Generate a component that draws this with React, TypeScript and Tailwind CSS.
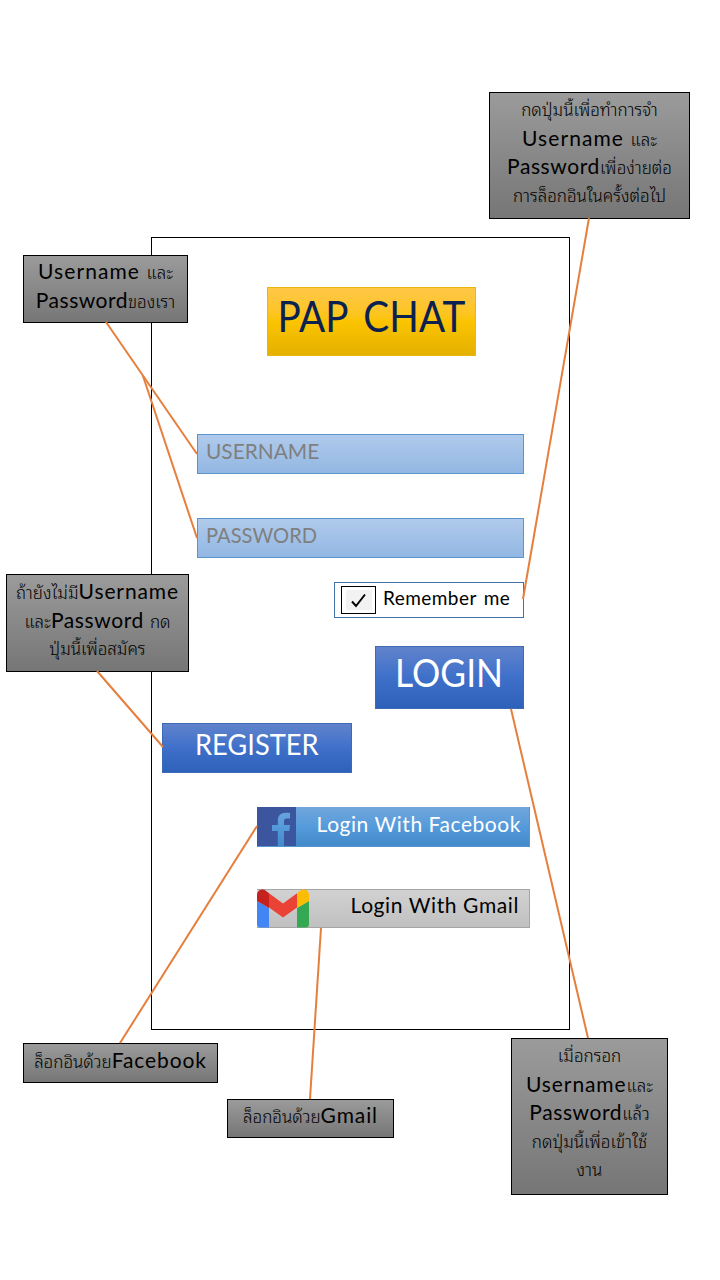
import type { ReactNode } from "react";

type NoteProps = { box: string; children: ReactNode };

function Note({ box, children }: NoteProps) {
  return (
    <div
      className={`absolute flex flex-col items-center border border-black bg-linear-to-b from-[#9b9b9b] to-[#767676] text-black ${box}`}
    >
      {children}
    </div>
  );
}

function Line({ children }: { children: ReactNode }) {
  return <div className="flex h-[28.6px] items-baseline whitespace-pre leading-[28.6px]">{children}</div>;
}

function En({ children, space = "tracking-[0.9px]" }: { children: ReactNode; space?: string }) {
  return <span className={`text-[21px] font-normal ${space}`}>{children}</span>;
}

function Th({ children, space = "tracking-normal" }: { children: ReactNode; space?: string }) {
  return (
    <span
      className={`font-['Noto_Sans_Thai_Looped','Noto_Looped_Thai',Loma,Garuda,Waree,Lato,sans-serif] text-[17px] font-light ${space}`}
    >
      {children}
    </span>
  );
}

const connectors = [
  [589, 218, 523, 599],
  [106, 322, 197, 454],
  [143, 376, 197, 538],
  [97, 671, 163, 747],
  [511, 709, 588, 1038],
  [257, 826, 120, 1043],
  [321, 928, 310, 1099],
];

function FacebookLogo() {
  return (
    <svg viewBox="0 0 39 39" className="h-[39px] w-[39px] shrink-0">
      <path
        fillRule="evenodd"
        fill="#3b559f"
        d="M0 0h39v39H27V24h5.300l.8-6H27v-3.700c0-1.800.6-2.900 3-2.900h3V6.100c-.6-.1-2.400-.3-4.500-.3-4.600 0-7.700 2.800-7.700 7.800V18H15v6h5.800v15H0z"
      />
    </svg>
  );
}

function GmailLogo() {
  return (
    <svg viewBox="0 0 52 39" className="-mt-px h-[39px] w-[52px] shrink-0">
      <path fill="#4285f4" d="M0 12l12 7v19.500H3.500A3.500 3.500 0 0 1 0 35z" />
      <path fill="#34a853" d="M40 19l12-7v23a3.500 3.500 0 0 1-3.500 3.500H40z" />
      <path fill="#fbbc04" d="M40 4.300l2.500-2C46-1.500 52 .8 52 6v6l-12 7z" />
      <path fill="#ea4335" d="M12 4.300l14 10.200L40 4.300V18.500L26 28.500 12 18.500z" />
      <path fill="#c5221f" d="M0 6C0 .8 6-1.500 9.500 2.200L12 4.300V19L0 12z" />
    </svg>
  );
}

export default function App() {
  return (
    <div className="relative h-[1280px] w-[720px] overflow-hidden bg-white pt-[237px] pl-[151px] font-[Lato,sans-serif]">
      <main className="flex h-[793px] w-[419px] flex-col border border-black pt-[49px]">
        <h1 className="ml-[115px] flex h-[69px] w-[209px] justify-center border border-[#e8b810] bg-linear-to-b from-[#ffc746] via-[#fbc400] to-[#e5b000] text-[43px] leading-[56px] whitespace-nowrap text-[#0b2150]">
          <span className="inline-block scale-x-[0.9] tracking-[0.2px] [word-spacing:6px]">PAP CHAT</span>
        </h1>
        <div className="mt-[78px] ml-[45px] h-10 w-[327px] border border-[#5b95cc] bg-linear-to-b from-[#b0caeb] to-[#92b7e3] pl-2 text-[21.5px] leading-[33px] text-[#7f7f7f]">
          <span className="inline-block origin-left scale-x-[0.97]">USERNAME</span>
        </div>
        <div className="mt-11 ml-[45px] h-10 w-[327px] border border-[#5b95cc] bg-linear-to-b from-[#b0caeb] to-[#92b7e3] pl-2 text-[21.5px] leading-[33px] text-[#7f7f7f]">
          <span className="inline-block origin-left scale-x-[0.935]">PASSWORD</span>
        </div>
        <label className="mt-6 ml-[182px] flex h-9 w-[190px] items-start border border-[#4472a8] bg-white pt-[3px] pl-1.5">
          <span className="flex h-7 w-[35px] items-center justify-center border border-black">
            <span className="flex h-5 w-[26px] items-center justify-center bg-[#f2f2f2]">
              <svg viewBox="0 0 16 15" className="h-[15px] w-4">
                <path d="M1 8.500l4 4.500L14 1.500" fill="none" stroke="#000" strokeWidth="2" />
              </svg>
            </span>
          </span>
          <span className="ml-[7px] text-[19px] leading-[24px] tracking-[0.45px] whitespace-nowrap text-black [word-spacing:2px]">
            Remember me
          </span>
        </label>
        <button className="mt-7 ml-[223px] flex h-[63px] w-[149px] justify-center border border-[#3d69b5] bg-linear-to-b from-[#6083cb] via-[#3e70ca] to-[#2e61ba] text-[38px] leading-[51px] text-white">
          <span className="inline-block scale-x-[0.93]">LOGIN</span>
        </button>
        <button className="mt-3.5 ml-2.5 flex h-[50px] w-[190px] justify-center border border-[#3d69b5] bg-linear-to-b from-[#6083cb] via-[#3e70ca] to-[#2e61ba] text-[29px] leading-[40px] text-white">
          <span className="inline-block scale-x-[0.94]">REGISTER</span>
        </button>
        <button className="mt-[34px] ml-[105px] flex h-10 w-[273px] justify-between border-r border-b border-[#5595cf] bg-linear-to-b from-[#71a6db] via-[#559bdb] to-[#438ac9] pr-2 text-[21px] leading-[34px] whitespace-nowrap text-white">
          <FacebookLogo />
          <span className="tracking-[0.55px]">Login With Facebook</span>
        </button>
        <button className="mt-[42px] ml-[105px] flex h-[39px] w-[273px] justify-between border-y border-r border-[#a5a5a5] bg-linear-to-b from-[#d2d2d2] to-[#c0c0c0] pr-2.5 text-[21px] leading-[30px] whitespace-nowrap text-black">
          <GmailLogo />
          <span className="tracking-[0.6px]">Login With Gmail</span>
        </button>
      </main>

      <Note box="left-[489px] top-[92px] h-[127px] w-[201px] pt-[2px]">
        <Line><Th>กดปุ่มนี้เพื่อทำการจำ</Th></Line>
        <Line><En space="tracking-[1.1px]">Username </En><Th>และ</Th></Line>
        <Line><En space="tracking-[0.6px]">Password</En><Th>เพื่อง่ายต่อ</Th></Line>
        <Line><Th>การล็อกอินในครั้งต่อไป</Th></Line>
      </Note>
      <Note box="left-[23px] top-[255px] h-[68px] w-[165px] pt-px">
        <Line><En space="tracking-[1.1px]">Username </En><Th>และ</Th></Line>
        <Line><En space="tracking-[0.5px]">Password</En><Th>ของเรา</Th></Line>
      </Note>
      <Note box="left-[6px] top-[574px] h-[98px] w-[183px] pt-[2px]">
        <Line><Th>ถ้ายังไม่มี</Th><En>Username</En></Line>
        <Line><Th>และ</Th><En space="tracking-[0.6px]">Password </En><Th>กด</Th></Line>
        <Line><Th>ปุ่มนี้เพื่อสมัคร</Th></Line>
      </Note>
      <Note box="left-[23px] top-[1043px] h-[40px] w-[195px] pt-[2px]">
        <Line><Th>ล็อกอินด้วย</Th><En>Facebook</En></Line>
      </Note>
      <Note box="left-[227px] top-[1099px] h-[39px] w-[167px] pt-px">
        <Line><Th>ล็อกอินด้วย</Th><En>Gmail</En></Line>
      </Note>
      <Note box="left-[511px] top-[1038px] h-[157px] w-[157px] pt-[2px]">
        <Line><Th>เมื่อกรอก</Th></Line>
        <Line><En>Username</En><Th>และ</Th></Line>
        <Line><En space="tracking-[0.6px]">Password</En><Th>แล้ว</Th></Line>
        <Line><Th>กดปุ่มนี้เพื่อเข้าใช้</Th></Line>
        <Line><Th>งาน</Th></Line>
      </Note>

      <svg className="pointer-events-none absolute inset-0 h-[1280px] w-[720px]" viewBox="0 0 720 1280">
        {connectors.map(([x1, y1, x2, y2]) => (
          <line key={`${x1}-${y1}`} x1={x1} y1={y1} x2={x2} y2={y2} stroke="#e67e3c" strokeWidth="2" />
        ))}
      </svg>
    </div>
  );
}
